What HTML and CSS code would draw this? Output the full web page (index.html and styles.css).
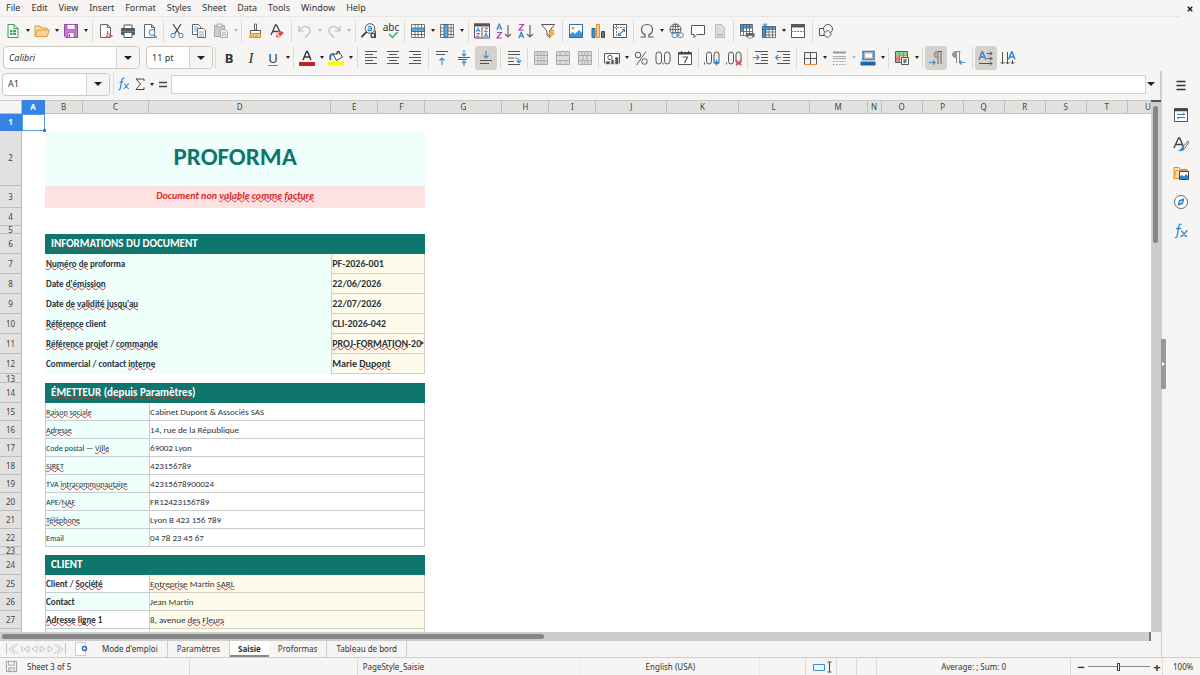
FILE: index.html
```html
<!DOCTYPE html>
<html lang="fr">
<head>
<meta charset="utf-8">
<title>Proforma</title>
<link rel="stylesheet" href="styles.css">
</head>
<body>
<header class="menubar">
  <nav class="menus">
    <button>File</button><button>Edit</button><button>View</button><button>Insert</button><button>Format</button><button>Styles</button><button>Sheet</button><button>Data</button><button>Tools</button><button>Window</button><button>Help</button>
  </nav>
  <button class="close" aria-label="Close document"><svg viewBox="0 0 6 6"><path d="M.8.8l4.4 4.400M5.200.8L.8 5.200" stroke="#222" stroke-width="1.600"/></svg></button>
</header>

<div class="toolbar" role="toolbar" aria-label="Standard">
  <button class="tool" aria-label="New"><svg viewBox="0 0 16 16"><path d="M3 1.500h6l4 4v9H3z" fill="#fff" stroke="#3c9a55"/><path d="M9 1.500v4h4" fill="none" stroke="#3c9a55"/><path d="M5 7h6v5H5z" fill="#3fa75d"/><path d="M5 9.500h6M7.500 7v5" stroke="#fff" stroke-width=".7"/></svg></button><button class="caret" aria-label="New menu"></button>
  <button class="tool" aria-label="Open"><svg viewBox="0 0 16 16"><path d="M1 13V3h5l1 2h6v2" fill="#fbdcae" stroke="#e79a3c"/><path d="M1 13.500L3.500 7h12L13 13.500z" fill="#fcd29a" stroke="#e79a3c"/></svg></button><button class="caret" aria-label="Open menu"></button>
  <button class="tool" aria-label="Save"><svg viewBox="0 0 16 16"><path d="M1.500 1.500h13v13H3l-1.500-1.500z" fill="#c77bd0" stroke="#9a3fa8"/><path d="M4 1.500h8v5H4z" fill="#fff" stroke="#9a3fa8" stroke-width=".7"/><path d="M5 9.500h6v5H5z" fill="#fff" stroke="#9a3fa8" stroke-width=".7"/><path d="M6.500 11v3" stroke="#9a3fa8"/></svg></button><button class="caret" aria-label="Save menu"></button>
  <span class="sep wide"></span>
  <button class="tool" aria-label="Export as PDF"><svg viewBox="0 0 16 16"><path d="M2.500 1.500h7l3 3v10h-10z" fill="#fff" stroke="#666"/><path d="M9.500 1.500v3h3" fill="none" stroke="#666"/><path d="M7 15c2-2 3-5 2.500-7 0 3 2 5 5 5-3-.5-5 .5-7.500 2z" fill="none" stroke="#e0454f"/></svg></button>
  <button class="tool" aria-label="Print"><svg viewBox="0 0 16 16"><path d="M4 5V2h8v3" fill="#fff" stroke="#555"/><rect x="1" y="5" width="14" height="7" rx="1" fill="#555"/><path d="M4 9.500h8v5H4z" fill="#fff" stroke="#555"/><path d="M1 8.500h14" stroke="#2f8fd8" stroke-width="1.500"/></svg></button>
  <button class="tool" aria-label="Print preview"><svg viewBox="0 0 16 16"><path d="M2.500 1.500h7l3 3v10h-10z" fill="#fff" stroke="#666"/><path d="M9.500 1.500v3h3" fill="none" stroke="#666"/><circle cx="10" cy="9.500" r="3" fill="#e8f3fc" stroke="#3c90d6"/><path d="M12 12l3 3" stroke="#3c90d6" stroke-width="1.300"/></svg></button>
  <span class="sep"></span>
  <button class="tool" aria-label="Cut"><svg viewBox="0 0 16 16" fill="none"><path d="M4 1l6.500 10M12 1L5.500 11" stroke="#444" stroke-width="1.200"/><circle cx="4" cy="12.500" r="2.200" stroke="#3c90d6"/><circle cx="12" cy="12.500" r="2.200" stroke="#3c90d6"/></svg></button>
  <button class="tool" aria-label="Copy"><svg viewBox="0 0 16 16" stroke="#666" fill="#fff"><path d="M1.500 1.500h6l2 2v8h-8z"/><path d="M6.500 5.500h6l2 2v7h-8z"/><path d="M3 4h4M3 6h3M3 8h3M8 9h5M8 11h5M8 13h5" stroke="#4b99d8" stroke-width=".8"/></svg></button>
  <button class="tool off" aria-label="Paste"><svg viewBox="0 0 16 16" stroke="#aaa" fill="#ccc"><path d="M1.500 2.500h10v11h-10z"/><path d="M4 1h5v3H4z" fill="#eee"/><path d="M7.500 6.500h5l2 2v6h-7z" fill="#eee"/><path d="M9 10h4M9 12h4"/></svg></button><button class="caret off" aria-label="Paste menu"></button>
  <span class="sep"></span>
  <button class="tool" aria-label="Clone formatting"><svg viewBox="0 0 16 16"><path d="M7.500 1h2v6h-2z" fill="#fff" stroke="#555" stroke-width=".9"/><path d="M3.500 7.500h10v3h-10z" fill="#fff" stroke="#555"/><path d="M3.500 10.500h10v4h-11z" fill="#f9c27a" stroke="#e48c20"/><path d="M6 12v2M9 12v2" stroke="#e48c20"/></svg></button>
  <button class="tool" aria-label="Clear formatting"><svg viewBox="0 0 16 16"><path d="M2 12L6.500 2h1L11 9M3.500 8.500h6" fill="none" stroke="#444" stroke-width="1.300"/><path d="M7 12l5-4 3 2-5 4.500-3-.5z" fill="#e5444c"/><path d="M7 12l2-1.500 2.500 2.500L10 14.500z" fill="#f6b4b7"/></svg></button>
  <span class="sep wide"></span>
  <button class="tool off" aria-label="Undo"><svg viewBox="0 0 16 16" fill="none" stroke="#bbb" stroke-width="1.200"><path d="M2 3v5h5M2.500 7.500C5 3.500 9 2.500 11.500 4.500s2 5-.5 7L8 14.500"/></svg></button><button class="caret off" aria-label="Undo menu"></button>
  <button class="tool off" aria-label="Redo"><svg viewBox="0 0 16 16" fill="none" stroke="#bbb" stroke-width="1.200"><path d="M14 3v5H9M13.500 7.500C11 3.500 7 2.500 4.500 4.500s-2 5 .5 7l3 3"/></svg></button><button class="caret off" aria-label="Redo menu"></button>
  <span class="sep wide"></span>
  <button class="tool" aria-label="Find and replace"><svg viewBox="0 0 16 16" fill="none"><circle cx="9" cy="5.500" r="4.800" stroke="#555"/><path d="M5.500 9L.5 14" stroke="#444" stroke-width="1.800"/><path d="M7 4.500c1-1.500 3.500-1 3.500.5v3M10.500 5.800C8.500 5.500 7 6 7 7s2.500 1.300 3.500-.3" stroke="#2b87d3" stroke-width="1.100"/><circle cx="12" cy="12.500" r="2" stroke="#333" stroke-width="1.200"/><path d="M14.200 7.500v7.500" stroke="#333" stroke-width="1.200"/></svg></button>
  <button class="tool spell" aria-label="Spelling"><span>abc</span><svg viewBox="0 0 16 7"><path d="M6 2l3.500 3.500L14.500 0" fill="none" stroke="#30b070" stroke-width="1.500"/></svg></button>
  <span class="sep"></span>
  <button class="tool" aria-label="Row"><svg viewBox="0 0 16 16"><path d="M1 1h14v14H1z" fill="#fff"/><path d="M1 5h14v4H1z" fill="#58a9e4"/><path d="M1.500 1.500h13v13h-13zM1.500 5h13M1.500 8.500h13M1.500 11.500h13M5 1.500V5M8 1.500V5M11.500 1.500V5M5 9v5.500M8 9v5.500M11.500 9v5.500" fill="none" stroke="#555" stroke-width=".8"/></svg></button><button class="caret" aria-label="Row menu"></button>
  <button class="tool" aria-label="Column"><svg viewBox="0 0 16 16"><path d="M1 1h14v14H1z" fill="#fff"/><path d="M5 1h4v14H5z" fill="#58a9e4"/><path d="M1.500 1.500h13v13h-13zM5 1.500v13M9 1.500v13M12 1.500v13M1.500 5H5M1.500 8H5M1.500 11.500H5M9 5h5.500M9 8h5.500M9 11.500h5.500" fill="none" stroke="#555" stroke-width=".8"/></svg></button><button class="caret" aria-label="Column menu"></button>
  <span class="sep wide"></span>
  <button class="tool" aria-label="Sort"><svg viewBox="0 0 16 16" fill="none"><path d="M.5 1h15v14H.5z" fill="#fff" stroke="#555"/><path d="M0 .5h16V3.500H0z" fill="#555"/><path d="M8 4v11" stroke="#555"/><path d="M2 9l2-4.200L6 9M2.800 7.700h2.400M10 14.200l2-4.200 2 4.200M10.800 13h2.400" stroke="#2b87d3"/><path d="M2.300 10.500h3.400l-3.400 3.500h3.600M10.300 5h3.400l-3.400 3.700h3.600" stroke="#a845b8"/></svg></button>
  <button class="tool" aria-label="Sort ascending"><svg viewBox="0 0 16 16" fill="none"><path d="M.8 6.800L3.300 1l2.500 5.800M1.700 5h3.200" stroke="#2b87d3" stroke-width="1.200"/><path d="M1 9.500h4.500L1 15h4.800" stroke="#a845b8" stroke-width="1.200"/><path d="M12 2v12M9 11l3 3 3-3" stroke="#666" stroke-width="1.200"/></svg></button>
  <button class="tool" aria-label="Sort descending"><svg viewBox="0 0 16 16" fill="none"><path d="M.8 15l2.500-5.800L5.800 15M1.700 13.200h3.200" stroke="#2b87d3" stroke-width="1.200"/><path d="M1 1.500h4.500L1 7h4.800" stroke="#a845b8" stroke-width="1.200"/><path d="M12 2v12M9 11l3 3 3-3" stroke="#666" stroke-width="1.200"/></svg></button>
  <button class="tool" aria-label="AutoFilter"><svg viewBox="0 0 16 16"><path d="M1.500 1.500h13L9.500 8v6L7 12V8z" fill="#fff" stroke="#555"/><path d="M11 7L8 12h2.500L9 15.500 14.500 10H12l2-3z" fill="#f7b45c" stroke="#e48c20" stroke-width=".6"/></svg></button>
  <span class="sep wide"></span>
  <button class="tool" aria-label="Image"><svg viewBox="0 0 16 16"><path d="M1.500 1.500h13v13h-13z" fill="#fff" stroke="#2b6ea8"/><circle cx="5" cy="5" r="1.600" fill="#f2a23c"/><path d="M2 14v-3l3-2 2 2 4-4 3 3v4z" fill="#3f93d6"/></svg></button>
  <button class="tool" aria-label="Chart"><svg viewBox="0 0 16 16"><path d="M2 5.500h3v9H2z" fill="#3f93d6" stroke="#1f6bb0"/><path d="M6.500 1.500h3v13h-3z" fill="#fbd08c" stroke="#e48c20"/><path d="M11.500 8.500h3v6h-3z" fill="#777" stroke="#444"/></svg></button>
  <button class="tool" aria-label="Pivot table"><svg viewBox="0 0 16 16" fill="none"><path d="M1.500 1.500h13v13h-13z" fill="#fff" stroke="#555"/><path d="M2 4.500h12.500M4.500 2v12.500" stroke="#777" stroke-dasharray="2 1"/><path d="M6.500 10v2.500H9M7 12l5-5M10 6.500h2.500V9" stroke="#2b87d3" stroke-width="1.100"/></svg></button>
  <span class="sep"></span>
  <button class="tool" aria-label="Special character"><svg viewBox="0 0 16 16"><path d="M1.500 14H6v-2.500C3.500 10.500 2.500 8.500 2.500 6.500c0-3 2.300-5 5.500-5s5.500 2 5.500 5c0 2-1 4-3.500 5V14h4.500" fill="none" stroke="#555" stroke-width="1.200"/></svg></button><button class="caret" aria-label="Special character menu"></button>
  <button class="tool" aria-label="Hyperlink"><svg viewBox="0 0 16 16" fill="none"><circle cx="7.500" cy="6.500" r="5.500" stroke="#555"/><path d="M2 6.500h11M7.500 1v11M3.500 3.500h8M3.500 9.500h8" stroke="#555" stroke-width=".8"/><ellipse cx="7.500" cy="6.500" rx="2.700" ry="5.500" stroke="#555" stroke-width=".8"/><rect x="4" y="10" width="6" height="4.500" rx="2.200" stroke="#3c90d6" fill="#f6f5f4"/><rect x="9.500" y="10" width="6" height="4.500" rx="2.200" stroke="#3c90d6" fill="#f6f5f4"/><path d="M8 12.200h4" stroke="#3c90d6"/></svg></button>
  <button class="tool" aria-label="Comment"><svg viewBox="0 0 16 16"><path d="M1.500 2.500h13v9H7l-3 3v-3H1.500z" fill="#fff" stroke="#555"/></svg></button>
  <button class="tool off" aria-label="Headers and footers"><svg viewBox="0 0 16 16"><path d="M3.500 1.500h6l3 3v10h-9z" fill="#ddd" stroke="#bbb"/><path d="M5 11h6v2H5z" fill="#bbb"/></svg></button>
  <span class="sep"></span>
  <button class="tool" aria-label="Print area"><svg viewBox="0 0 16 16"><path d="M1 1h12v11H1z" fill="#fff"/><path d="M1 1h12v4H1zM1 5h3v3H1z" fill="#4b9fe0"/><path d="M1.500 1.500h12v11h-12zM1.500 5h12M1.500 8.500h12M4.500 1.500v11M7.500 1.500v11M10.500 1.500v11" fill="none" stroke="#555" stroke-width=".8"/><path d="M7 10h8.500v4H7z" fill="#666"/><path d="M9 12.500h4.500V15H9z" fill="#fff" stroke="#2f78b8" stroke-width=".7"/></svg></button>
  <button class="tool" aria-label="Freeze"><svg viewBox="0 0 16 16"><path d="M2 2h13v13H2z" fill="#fff"/><path d="M1 3h4v12H1zM3 3h12v3H3z" fill="#4b9fe0"/><path d="M1.500 3.500h13v11h-13zM5 3.500v11M8 3.500v11M11.500 3.500v11M1.500 6.500h13M1.500 9h13M1.500 12h13" fill="none" stroke="#555" stroke-width=".8"/><path d="M4 0v5M1.700 1l4.600 3M6.300 1L1.700 4" stroke="#1c78c4" stroke-width=".8"/></svg></button><button class="caret" aria-label="Freeze menu"></button>
  <button class="tool" aria-label="Split window"><svg viewBox="0 0 16 16"><path d="M1.500 1.500h13v13h-13z" fill="#fff" stroke="#555"/><path d="M1 1h14v3.500H1z" fill="#555"/><path d="M1 8.500h14" stroke="#2b87d3" stroke-dasharray="2 1"/></svg></button>
  <span class="sep wide"></span>
  <button class="tool" aria-label="Draw functions"><svg viewBox="0 0 16 16" fill="#f6f5f4" stroke="#555"><path d="M1.500 5.500h7v7h-7z"/><circle cx="10" cy="6" r="4.500"/><path d="M9.500 7l4 4-4 4-4-4z"/></svg></button>
</div>

<div class="toolbar" role="toolbar" aria-label="Formatting">
  <div class="combo font"><input aria-label="Font name" value="Calibri"><button aria-label="Font list"></button></div>
  <div class="combo size"><input aria-label="Font size" value="11 pt"><button aria-label="Size list"></button></div>
  <span class="sep"></span>
  <button class="tool letter bold" aria-label="Bold">B</button>
  <button class="tool letter italic" aria-label="Italic">I</button>
  <button class="tool letter under" aria-label="Underline">U</button><button class="caret" aria-label="Underline menu"></button>
  <span class="sep"></span>
  <button class="tool" aria-label="Font color"><svg viewBox="0 0 16 16"><path d="M4 10L7.500 1.500h1L12 10M5.500 7h5" fill="none" stroke="#333" stroke-width="1.400"/><path d="M0 12h16v4H0z" fill="#c5221f"/></svg></button><button class="caret" aria-label="Font color menu"></button>
  <button class="tool" aria-label="Background color"><svg viewBox="0 0 16 16"><path d="M5.500 5L11 2l3.500 5-6 3.500z" fill="#fff" stroke="#444"/><path d="M9 5V1.500h2.500V4" fill="none" stroke="#444"/><path d="M6 4C2.500 3.500 1.500 6 2.500 10" fill="none" stroke="#2277b8" stroke-width="2"/><path d="M0 12h16v4H0z" fill="#ffff00"/></svg></button><button class="caret" aria-label="Background color menu"></button>
  <span class="sep wide"></span>
  <button class="tool" aria-label="Align left"><svg viewBox="0 0 16 16"><path d="M2 1.500h12M2 4.500h8M2 7.500h12M2 10.500h8M2 13.500h12" stroke="#555"/></svg></button>
  <button class="tool" aria-label="Align center"><svg viewBox="0 0 16 16"><path d="M2 1.500h12M4 4.500h8M2 7.500h12M4 10.500h8M2 13.500h12" stroke="#555"/></svg></button>
  <button class="tool" aria-label="Align right"><svg viewBox="0 0 16 16"><path d="M2 1.500h12M6 4.500h8M2 7.500h12M6 10.500h8M2 13.500h12" stroke="#555"/></svg></button>
  <span class="sep"></span>
  <button class="tool" aria-label="Align top"><svg viewBox="0 0 16 16" fill="none"><path d="M2 1.500h12M2 4.500h9" stroke="#555"/><path d="M8 15V8M5.500 10.500L8 8l2.500 2.500" stroke="#3c90d6" stroke-width="1.200"/></svg></button>
  <button class="tool" aria-label="Center vertically"><svg viewBox="0 0 16 16" fill="none"><path d="M2 7.500h12M2 9.500h9" stroke="#555"/><path d="M8 0v5.500M6 4l2 2 2-2M8 16v-4.500M6 13l2-2 2 2" stroke="#3c90d6" stroke-width="1.200"/></svg></button>
  <button class="tool on" aria-label="Align bottom"><svg viewBox="0 0 16 16" fill="none"><path d="M2 10.500h12M2 13.500h9" stroke="#555"/><path d="M8 1v7M5.500 5.500L8 8l2.500-2.500" stroke="#3c90d6" stroke-width="1.200"/></svg></button>
  <span class="sep wide"></span>
  <button class="tool" aria-label="Wrap text"><svg viewBox="0 0 16 16" fill="none"><path d="M2 1.500h12M2 4.500h12M2 8h6M2 14.500h12M2 11.500h6" stroke="#555"/><path d="M9 8c2.500 0 4 1 4 4M10.800 10.500l2.200 2.200 2.200-2.200" stroke="#3c90d6" stroke-width="1.200"/></svg></button>
  <span class="sep"></span>
  <button class="tool off" aria-label="Merge and center"><svg viewBox="0 0 16 16"><path d="M1.500 1.500h13v13h-13zM1.500 5.500h13M1.500 10.500h13M5 1.500v4M8 1.500v4M11 1.500v4M5 10.500v4M8 10.500v4M11 10.500v4" fill="#ddd" stroke="#aaa"/><path d="M4 8h8" stroke="#aaa"/></svg></button>
  <button class="tool off" aria-label="Merge cells"><svg viewBox="0 0 16 16"><path d="M1.500 1.500h13v13h-13zM1.500 5.500h13M1.500 10.500h13M5 1.500v4M11 1.500v4M5 10.500v4M11 10.500v4" fill="#ddd" stroke="#aaa"/></svg></button>
  <button class="tool off" aria-label="Unmerge cells"><svg viewBox="0 0 16 16"><path d="M1.500 1.500h13v13h-13zM1.500 5.500h13M1.500 10.500h13M5 1.500v4M8 1.500v4M11 1.500v4M6 5.500v5M10 5.500v5M5 10.500v4M8 10.500v4M11 10.500v4" fill="#ddd" stroke="#aaa"/></svg></button>
  <span class="sep"></span>
  <button class="tool" aria-label="Currency"><svg viewBox="0 0 16 16"><path d="M.5 3.500h15v9.500H.5z" fill="#fff" stroke="#555"/><circle cx="6" cy="7.500" r="2.200" fill="none" stroke="#555"/><path d="M2 11h4v3.500H2zM7 9.500h3v5H7zM11 7h3.500v7.500H11z" fill="#555" stroke="#f6f5f4" stroke-width=".6"/></svg></button><button class="caret" aria-label="Currency menu"></button>
  <button class="tool" aria-label="Percent"><svg viewBox="0 0 16 16" fill="none" stroke="#555"><circle cx="5" cy="5" r="2.800"/><circle cx="11.500" cy="11.500" r="2.800"/><path d="M13 1.500L3.500 15"/></svg></button>
  <button class="tool" aria-label="Number"><svg viewBox="0 0 16 16" fill="none" stroke="#555"><rect x="1" y="2" width="5.500" height="12" rx="2.700"/><rect x="9.500" y="2" width="5.500" height="12" rx="2.700"/><path d="M8 12.500v2"/></svg></button>
  <button class="tool" aria-label="Date"><svg viewBox="0 0 16 16" fill="none"><path d="M1.500 2.500h13v12h-13z" fill="#fff" stroke="#555"/><path d="M1.500 3.500h13" stroke="#444" stroke-width="2"/><path d="M4.500 1v3M11.500 1v3" stroke="#444"/><path d="M5.500 7h5l-3 6" stroke="#555" stroke-width="1.200"/></svg></button>
  <span class="sep"></span>
  <button class="tool" aria-label="Add decimal place"><svg viewBox="0 0 16 16" fill="none" stroke="#555"><rect x="2.500" y="2" width="5" height="12" rx="2.500"/><rect x="10" y="2" width="5" height="12" rx="2.500"/><path d="M.5 12.500v2"/><path d="M12.500 9.500v6M9.500 12.500h6" stroke="#2b87d3" stroke-width="1.300"/></svg></button>
  <button class="tool" aria-label="Delete decimal place"><svg viewBox="0 0 16 16" fill="none" stroke="#555"><rect x="2.500" y="2" width="5" height="12" rx="2.500"/><rect x="10" y="2" width="5" height="12" rx="2.500"/><path d="M.5 12.500v2"/><path d="M10 10l5.500 5.500M15.500 10L10 15.500" stroke="#e0454f" stroke-width="1.300"/></svg></button>
  <span class="sep"></span>
  <button class="tool" aria-label="Increase indent"><svg viewBox="0 0 16 16" fill="none"><path d="M2 1.500h13M8 4.500h7M8 7.500h7M8 10.500h7M2 13.500h13" stroke="#555"/><path d="M0 7.500h6M3.500 5L6 7.500 3.500 10" stroke="#3c90d6" stroke-width="1.200"/></svg></button>
  <button class="tool" aria-label="Decrease indent"><svg viewBox="0 0 16 16" fill="none"><path d="M2 1.500h13M8 4.500h7M8 7.500h7M8 10.500h7M2 13.500h13" stroke="#555"/><path d="M6.500 7.500H.5M3 5L.5 7.500 3 10" stroke="#3c90d6" stroke-width="1.200"/></svg></button>
  <span class="sep"></span>
  <button class="tool" aria-label="Borders"><svg viewBox="0 0 16 16" fill="none"><path d="M2.500 14V2.500h12V14M8.500 2.500V14M2.500 8.500h12" stroke="#555"/><path d="M2 14.500h13" stroke="#e8893c"/></svg></button><button class="caret" aria-label="Borders menu"></button>
  <button class="tool off" aria-label="Border style"><svg viewBox="0 0 16 16"><path d="M2 2.500h13" stroke="#999" stroke-width="2"/><path d="M2 6.500h13M2 8.500h13" stroke="#aaa"/><path d="M2 11.500h13M2 14.500h13" stroke="#aaa" stroke-dasharray="2 1"/></svg></button><button class="caret off" aria-label="Border style menu"></button>
  <button class="tool" aria-label="Border color"><svg viewBox="0 0 16 16"><path d="M3 1.500h11v8H3z" fill="#fff" stroke="#2f7fc0" stroke-width="1.600"/><path d="M4.500 3h8v5h-8z" fill="none" stroke="#777" stroke-width=".6"/><path d="M.5 11.500h15v4H.5z" fill="#1e66a8"/></svg></button><button class="caret" aria-label="Border color menu"></button>
  <span class="sep"></span>
  <button class="tool" aria-label="Conditional formatting"><svg viewBox="0 0 16 16"><path d="M1.500 1.500h12v11h-12z" fill="#fff" stroke="#555"/><path d="M2 2h4v3H2zM6 2h7v3H6z" fill="#8ad9a0"/><path d="M2 6h4v3H2zM2 9h4v3H2z" fill="#ef8a84"/><path d="M6 5h7v3H6z" fill="#f7c890"/><path d="M1.500 5.300h12M1.500 8.800h12M5.500 1.500v11M9.500 1.500v11" stroke="#777" stroke-width=".7"/><path d="M7.500 7.500h7v7h-7z" fill="#fff" stroke="#555"/><path d="M9 10h4M9 12h4M12 8.800l-2 4.500" stroke="#333" stroke-width=".8"/></svg></button><button class="caret" aria-label="Conditional menu"></button>
  <span class="sep"></span>
  <button class="tool on" aria-label="Left to right"><svg viewBox="0 0 16 16" fill="none"><path d="M14 1.500H9a3 3 0 0 0 0 6h1M10 1.500V14M13 1.500V14" stroke="#666"/><path d="M6 4.500a3 3 0 0 1 3-3h1v6H9a3 3 0 0 1-3-3z" fill="#aaa"/><path d="M1 12.500h6M5 10.500l2 2-2 2" stroke="#3c90d6" stroke-width="1.200"/></svg></button>
  <button class="tool" aria-label="Right to left"><svg viewBox="0 0 16 16" fill="none"><path d="M10.500 1.500h-5a3 3 0 0 0 0 6h1M6.500 1.500V13M9.500 1.500V13" stroke="#888"/><path d="M2.500 4.500a3 3 0 0 1 3-3h1v6h-1a3 3 0 0 1-3-3z" fill="#999"/><path d="M15 12.500H9.500M11.500 10.500l-2 2 2 2" stroke="#3c90d6" stroke-width="1.200"/></svg></button>
  <span class="sep wide"></span>
  <button class="tool on" aria-label="Horizontal text"><svg viewBox="0 0 16 16" fill="none"><path d="M1 10L4 2h.6L8 10M2.200 7h4.500" stroke="#2b87d3" stroke-width="1.400"/><path d="M9 3.500h5M9 8.500h5M1 13.500h13M12 1.500l2 2-2 2M12 6.500l2 2-2 2M12 11.500l2 2-2 2" stroke="#555"/></svg></button>
  <button class="tool" aria-label="Vertical text"><svg viewBox="0 0 16 16" fill="none"><path d="M8.500 9.500L11.500 2h.6L15 9.500M9.500 7h4.500" stroke="#2b87d3" stroke-width="1.400"/><path d="M2.500 2v12M7.500 2v12M12.500 10v4M.5 12l2 2 2-2M5.500 12l2 2 2-2M10.500 12l2 2 2-2" stroke="#555"/></svg></button>
</div>

<div class="main">
  <div class="workspace">
    <div class="formulabar">
      <div class="combo name"><input aria-label="Name box" value="A1"><button aria-label="Names"></button></div>
      <span class="sep"></span>
      <button class="fx" aria-label="Function wizard"><svg viewBox="0 0 12 14" fill="none" stroke="#2b87d3"><path d="M6.500 1.500C4.500.5 4 2 3.700 4L2.500 10.500c-.3 2-1 2.500-2 2M1.500 5h4" stroke-width="1.200"/><path d="M6 7c2-.5 2 5 5 4.500M11 6.500C9.500 6.500 8 12 5.500 11.500" stroke-width="1.100"/></svg></button>
      <button class="fx" aria-label="Select function"><svg viewBox="0 0 12 14" fill="none" stroke="#444"><path d="M10 4V2H2l4.500 5L2 12.500h8v-2"/></svg></button><button class="caret" aria-label="Function menu"></button>
      <button class="fx" aria-label="Formula"><svg viewBox="0 0 12 14"><path d="M2 5.500h8M2 9.500h8" stroke="#444" stroke-width="1.400"/></svg></button>
      <input class="line" aria-label="Input line">
      <button class="caret big" aria-label="Expand formula bar"></button>
    </div>
    <div class="grid">
      <div class="cells">
        <table>
          <colgroup><col class="c22"><col class="c23"><col class="c38"><col class="c66"><col class="c182"><col class="c47"><col class="c47"><col class="c77"><col class="c47"><col class="c47"><col class="c71"><col class="c71"><col class="c71"><col class="c58"><col class="c14"><col class="c41"><col class="c41"><col class="c41"><col class="c41"><col class="c41"><col class="c41"><col class="c41"></colgroup>
          <thead><tr class="h14"><th class="corner"></th><th class="sel">A</th><th>B</th><th>C</th><th>D</th><th>E</th><th>F</th><th>G</th><th>H</th><th>I</th><th>J</th><th>K</th><th>L</th><th>M</th><th>N</th><th>O</th><th>P</th><th>Q</th><th>R</th><th>S</th><th>T</th><th>U</th></tr></thead>
          <tbody>
            <tr class="h17"><th class="sel">1</th><td class="cursor"><i></i></td><td colspan="20"></td></tr>
            <tr class="h55"><th>2</th><td></td><td colspan="5" class="title">PROFORMA</td></tr>
            <tr class="h22"><th>3</th><td></td><td colspan="5" class="notice">Document non <u>valable</u> <u>comme</u> <u>facture</u></td></tr>
            <tr class="h18"><th>4</th><td></td></tr>
            <tr class="h8"><th>5</th><td></td></tr>
            <tr class="h20"><th>6</th><td></td><td colspan="5" class="section"><u>INFORMATIONS</u> DU DOCUMENT</td></tr>
            <tr class="h20"><th>7</th><td></td><td colspan="3" class="label strong"><u>Numéro</u> <u>de</u> proforma</td><td colspan="2" class="value big">PF-2026-001</td></tr>
            <tr class="h20"><th>8</th><td></td><td colspan="3" class="label strong">Date <u>d'émission</u></td><td colspan="2" class="value big">22/06/2026</td></tr>
            <tr class="h20"><th>9</th><td></td><td colspan="3" class="label strong">Date <u>de</u> <u>validité</u> <u>jusqu'au</u></td><td colspan="2" class="value big">22/07/2026</td></tr>
            <tr class="h20"><th>10</th><td></td><td colspan="3" class="label strong"><u>Référence</u> client</td><td colspan="2" class="value big">CLI-2026-042</td></tr>
            <tr class="h20"><th>11</th><td></td><td colspan="3" class="label strong"><u>Référence</u> <u>projet</u> / <u>commande</u></td><td colspan="2" class="value big cut"><u>PROJ-FORMATION</u>-20<i></i></td></tr>
            <tr class="h20"><th>12</th><td></td><td colspan="3" class="label strong">Commercial / contact <u>interne</u></td><td colspan="2" class="value big">Marie <u>Dupont</u></td></tr>
            <tr class="h9"><th>13</th><td></td></tr>
            <tr class="h20"><th>14</th><td></td><td colspan="5" class="section"><u>ÉMETTEUR</u> (<u>depuis</u> <u>Paramètres</u>)</td></tr>
            <tr class="h18"><th>15</th><td></td><td colspan="2" class="label ruled"><u>Raison</u> <u>sociale</u></td><td colspan="3" class="plain">Cabinet Dupont &amp; Associés SAS</td></tr>
            <tr class="h18"><th>16</th><td></td><td colspan="2" class="label ruled"><u>Adresse</u></td><td colspan="3" class="plain">14, rue de la République</td></tr>
            <tr class="h18"><th>17</th><td></td><td colspan="2" class="label ruled">Code postal — <u>Ville</u></td><td colspan="3" class="plain">69002 Lyon</td></tr>
            <tr class="h18"><th>18</th><td></td><td colspan="2" class="label ruled"><u>SIRET</u></td><td colspan="3" class="plain">423156789</td></tr>
            <tr class="h18"><th>19</th><td></td><td colspan="2" class="label ruled">TVA <u>intracommunautaire</u></td><td colspan="3" class="plain">42315678900024</td></tr>
            <tr class="h18"><th>20</th><td></td><td colspan="2" class="label ruled">APE/<u>NAF</u></td><td colspan="3" class="plain">FR12423156789</td></tr>
            <tr class="h18"><th>21</th><td></td><td colspan="2" class="label ruled"><u>Téléphone</u></td><td colspan="3" class="plain">Lyon B 423 156 789</td></tr>
            <tr class="h18"><th>22</th><td></td><td colspan="2" class="label ruled">Email</td><td colspan="3" class="plain">04 78 23 45 67</td></tr>
            <tr class="h8"><th>23</th><td></td></tr>
            <tr class="h20"><th>24</th><td></td><td colspan="5" class="section">CLIENT</td></tr>
            <tr class="h18"><th>25</th><td></td><td colspan="2" class="label ruled strong white">Client / <u>Société</u></td><td colspan="3" class="value"><u>Entreprise</u> Martin <u>SARL</u></td></tr>
            <tr class="h18"><th>26</th><td></td><td colspan="2" class="label ruled strong">Contact</td><td colspan="3" class="value">Jean Martin</td></tr>
            <tr class="h18"><th>27</th><td></td><td colspan="2" class="label ruled strong white"><u>Adresse</u> <u>ligne</u> 1</td><td colspan="3" class="value">8, avenue <u>des</u> <u>Fleurs</u></td></tr>
            <tr class="h18"><th></th><td></td><td colspan="2" class="label ruled"></td><td colspan="3" class="value"></td></tr>
          </tbody>
        </table>
      </div>
      <div class="vscroll"><span></span></div>
    </div>
    <div class="hscroll"><span></span></div>
    <div class="tabs">
      <svg class="nav" viewBox="0 0 62 14" fill="none" stroke="#c4c4c4"><path d="M1.500 1v12M10 2L4 7l6 5M13 2L7 7l6 5M17 4v6M24 4l-5 3 5 3zM32 4l-5 3 5 3zM35 4l5 3-5 3zM43 4l5 3-5 3zM49 2l6 5-6 5M52 2l6 5-6 5M60.500 1v12"/></svg>
      <button class="addtab" aria-label="Add sheet"><svg viewBox="0 0 14 16"><path d="M1.500 1.500h10v13h-10z" fill="#fff" stroke="#ccc"/><circle cx="10.500" cy="7.500" r="2" fill="#fff" stroke="#2866c0" stroke-width="1.500"/></svg></button>
      <button class="tab">Mode d'emploi</button><button class="tab">Paramètres</button><button class="tab current">Saisie</button><button class="tab">Proformas</button><button class="tab">Tableau de bord</button>
    </div>
  </div>
  <aside class="sidebar">
    <button aria-label="Sidebar settings"><svg viewBox="0 0 16 16"><path d="M3.500 3.500h9M3.500 7.500h9M3.500 11.500h9" stroke="#333" stroke-width="1.400"/></svg></button>
    <button aria-label="Properties"><svg viewBox="0 0 16 16" fill="none"><path d="M1.500 1.500h13v13h-13z" fill="#fff" stroke="#555"/><path d="M1 3h14" stroke="#444" stroke-width="2.500"/><path d="M4 7.500h8M4 10.500h8M10 6l2 1.500M6 12l-2-1.500" stroke="#2b87d3"/></svg></button>
    <button aria-label="Styles"><svg viewBox="0 0 16 16" fill="none"><path d="M1 12L5.500 2h1.200L10.500 11M2.500 8.500h6.500" stroke="#444" stroke-width="1.400"/><path d="M15 5l-5 6 1.500 1.500L15.500 7z" fill="#fff" stroke="#555" stroke-width=".9"/><path d="M10 11c-3 .5-2 3.500-5.500 3.500 3.500 1.500 7 .5 7-2z" fill="#3c90d6"/></svg></button>
    <button aria-label="Gallery"><svg viewBox="0 0 16 16"><path d="M1 13.500V2.500h5l1 2h7v2M1 13.500h5" fill="#fce0b8" stroke="#e48c20"/><path d="M1 13.500l2-8h12v8z" fill="#fbd3a0" stroke="#e48c20" stroke-width=".8"/><path d="M6.500 6.500h9v8h-9z" fill="#fff" stroke="#444"/><path d="M7 14v-3l2-1 2 1.500 2-2.500 2 2v3z" fill="#2b87d3"/></svg></button>
    <button aria-label="Navigator"><svg viewBox="0 0 16 16"><circle cx="8" cy="8" r="6.500" fill="#fff" stroke="#666"/><path d="M11.500 4l-1.500 6-5.500 2L6 6z" fill="#2b87d3"/><circle cx="8" cy="8" r="1" fill="#fff"/></svg></button>
    <button aria-label="Functions"><svg viewBox="0 0 16 16" fill="none" stroke="#2b87d3"><path d="M8.500 1.500C6.500.5 6 2 5.700 4L4.300 12c-.4 2.500-1.300 3-2.500 2.500M3 5.500h5" stroke-width="1.300"/><path d="M8 8c2.500-.5 2.500 6 6 5.500M14.500 7.500c-2 0-4 6.500-7 6" stroke-width="1.300"/></svg></button>
    <span class="handle"></span>
  </aside>
</div>

<footer class="status">
  <span class="doc"><svg viewBox="0 0 14 14" fill="none" stroke="#999"><path d="M1.500 1.500h11v11h-11zM4 1.500v4h6v-4M4 12.500V8.500h6v4M6 10v2"/></svg></span>
  <span>Sheet 3 of 5</span>
  <span></span>
  <span class="first">PageStyle_Saisie</span>
  <span class="mid first">English (USA)</span>
  <span></span>
  <span class="mode"><svg viewBox="0 0 22 12" fill="none"><path d="M2.500 3.500h11v6h-11z" stroke="#3c90d6"/><path d="M18.500 1.500v9M16.500 1h4M16.500 11h4" stroke="#444"/></svg></span>
  <span></span><span></span>
  <span class="mid">Average: ; Sum: 0</span>
  <span class="zoom"><button aria-label="Zoom out">−</button><input type="range" aria-label="Zoom" min="0" max="100" value="49"><button aria-label="Zoom in">+</button></span>
  <span class="pct">100%</span>
</footer>
</body>
</html>
```
FILE: styles.css
```css
* { box-sizing: border-box; }
body { margin: 0; height: 100vh; display: flex; flex-direction: column; overflow: hidden; background: #f6f5f4; color: #333; font: 9px/12px "Noto Sans", sans-serif; }
button, input { font: inherit; color: inherit; margin: 0; padding: 0; border: 0; background: none; min-width: 0; }
svg { display: block; }

.menubar { display: flex; flex: none; height: 17px; justify-content: space-between; }
.menus { display: flex; flex: 1; gap: 11px; padding-left: 6px; border-bottom: 1px solid #e6e5e3; }
.close { width: 17px; display: grid; place-items: center; margin-right: 2px; }
.close svg { width: 6px; height: 6px; }

.toolbar { display: flex; flex: none; height: 27px; align-items: center; padding-left: 2px; }
.tool { flex: none; width: 22px; height: 24px; display: grid; place-items: center; border-radius: 3px; }
.tool svg { width: 16px; height: 16px; }
.tool.on { background: #d5d2ce; }
.spell { align-content: center; font-size: 10px; line-height: 10px; }
.tool.spell svg { height: 7px; }
.caret { flex: none; width: 7px; height: 22px; display: grid; place-items: center; }
.caret::after, .combo button::after { content: ""; border: 2px solid transparent; border-top: 3px solid #222; border-bottom: 0; }
.caret.off::after { border-top-color: #bbb; }
.caret.big { width: 10px; }
.caret.big::after, .combo button::after { border-width: 4px 4px 0; }
.sep { flex: none; width: 5px; height: 22px; background: linear-gradient(#dddbd8, #dddbd8) center / 1px 100% no-repeat; }
.sep.wide { width: 6px; }
.letter { font-size: 13px; line-height: 16px; }
.bold { font-weight: 700; }
.italic { font-family: "Liberation Serif", serif; font-style: italic; font-size: 15px; }
.under { text-decoration: underline #3c90d6; text-underline-offset: 2px; }

.combo { display: flex; flex: none; height: 23px; border: 1px solid #cdc7c2; border-radius: 4px; overflow: hidden; background: #fff; }
.combo input { flex: 1; padding-left: 5px; }
.combo button { width: 23px; display: grid; place-items: center; border-left: 1px solid #d8d4d0; background: #f6f5f4; }
.font { width: 137px; margin-left: 1px; font-style: italic; }
.size { width: 67px; margin-left: 6px; }
.name { width: 108px; }

.main { flex: 1; display: flex; min-height: 0; }
.workspace { flex: 1; min-width: 0; display: flex; flex-direction: column; }
.formulabar { display: flex; flex: none; height: 29px; align-items: center; padding: 0 4px 3px 2px; border-right: 1px solid #d0cecb; }
.formulabar .sep { margin-left: 1px; }
.fx { flex: none; width: 16px; height: 20px; display: grid; place-items: center; }
.fx svg { width: 12px; height: 14px; }
.line { flex: 1; height: 19px; border: 1px solid #d5d2cf; background: #fff; padding: 0 4px; }

.grid { flex: 1; display: flex; min-height: 0; }
.cells { flex: 1; overflow: hidden; background: #fff; }
table { width: 1169px; table-layout: fixed; border-collapse: separate; border-spacing: 0; }
th, td { padding: 0; overflow: hidden; white-space: nowrap; line-height: 8px; }
th { background: #e1e1e0; border-right: 1px solid #bdbdbc; border-bottom: 1px solid #bdbdbc; font-size: 8px; font-weight: 400; color: #444; text-align: center; }
thead th { border-top: 1px solid #c8c8c7; }
th.corner { background: #f6f5f4; }
th.sel { background: #3584e4; border-color: #3584e4; color: #fff; font-weight: 700; }
td { font-family: Carlito, Lato, sans-serif; font-size: 9px; color: #2b3440; text-align: left; }
u { text-decoration: underline wavy #e03030 1px; text-underline-offset: -1px; text-decoration-skip-ink: none; }

.c14 { width: 14px; } .c22 { width: 22px; } .c23 { width: 23px; } .c38 { width: 38px; } .c41 { width: 41px; }
.c47 { width: 47px; } .c58 { width: 58px; } .c66 { width: 66px; } .c71 { width: 71px; } .c77 { width: 77px; } .c182 { width: 182px; }
.h8 { height: 8px; } .h9 { height: 9px; } .h14 { height: 14px; } .h17 { height: 17px; } .h18 { height: 18px; }
.h20 { height: 20px; } .h22 { height: 22px; } .h55 { height: 55px; }
.h8 th, .h9 th { line-height: 7px; }

.cursor { position: relative; overflow: visible; box-shadow: inset 0 0 0 1px #5b9bea; }
.cursor i { position: absolute; right: -1px; bottom: -1px; width: 3px; height: 3px; background: #3584e4; }
.title { background: #effffc; color: #0f766e; font-size: 25px; font-weight: 700; line-height: 30px; text-align: center; padding-bottom: 4px; }
.notice { background: #fee2e2; color: #dc2626; font-size: 10px; font-weight: 700; font-style: italic; line-height: 14px; text-align: center; padding-bottom: 2px; }
.section { background: #0f766e; color: #fff; font-size: 11px; font-weight: 700; line-height: 16px; padding-left: 6px; }
.label, .value, .plain { line-height: 14px; padding-left: 1px; }
.label { background: #effffc; }
.strong, .big { font-weight: 700; }
.value { background: #fffbeb; border: 1px solid #d1d0c8; border-top: 0; }
.big { font-size: 10px; }
.plain { border: 1px solid #c9cdcd; border-top: 0; }
.value, .plain { padding-left: 0; }
.ruled { border: 1px solid #c9cdcd; border-width: 0 0 1px 1px; padding-left: 0; font-size: 8px; }
.ruled.strong { font-size: 9px; }
.white { background: #fff; }
.cut { position: relative; }
.cut i { position: absolute; right: 0; top: 7px; border: 2px solid transparent; border-left: 3px solid #8b1a1a; border-right: 0; }

.vscroll { width: 10px; flex: none; background: #cdcdcd; padding: 4px 3px 0 2px; border-top: 2px solid #555; }
.vscroll span { display: block; height: 26%; border-radius: 3px; background: #858585; }
.hscroll { flex: none; height: 9px; background: #cdcdcd; padding: 2px; margin-right: 10px; border-right: 2px solid #777; }
.hscroll span { display: block; width: 47.3%; height: 5px; border-radius: 3px; background: #858585; }

.tabs { display: flex; flex: none; height: 17px; border-bottom: 1px solid #d0cecb; font-size: 8px; }
.nav { width: 62px; height: 14px; margin: 1px 7px 0 5px; }
.addtab { width: 14px; margin-right: 5px; }
.addtab svg { width: 14px; height: 16px; }
.tab { padding: 0 9px; border-right: 1px solid #d0cecb; }
.tab.current { background: #fff; font-weight: 700; border-right: 0; padding: 2px 8px 0; border-bottom: 2px solid #888; }

.sidebar { position: relative; flex: none; width: 39px; display: flex; flex-direction: column; align-items: center; gap: 5px; padding-top: 3px; border-left: 1px solid #d0cecb; border-bottom: 1px solid #d0cecb; }
.sidebar button { width: 24px; height: 24px; display: grid; place-items: center; }
.sidebar button svg { width: 16px; height: 16px; }
.handle { position: absolute; left: -1px; top: 268px; width: 5px; height: 50px; background: #999; }
.handle::after { content: ""; position: absolute; left: 1px; top: 23px; border: 2px solid transparent; border-left: 3px solid #fff; border-right: 0; }

.status { flex: none; height: 17px; display: grid; grid-template-columns: 22px 168fr 168fr 224fr 179fr 46fr 31px 20px 20px 194fr 92px 37px; font-size: 8px; line-height: 17px; }
.status > span { padding-left: 5px; border-right: 1px solid #dddbd8; white-space: nowrap; }
.status > span.doc { border: 0; }
.status > .mid { text-align: center; padding: 0; }
.status > .first { border-right-color: #eceae8; }
.doc svg { width: 13px; height: 13px; margin-top: 2px; }
.mode svg { width: 22px; height: 12px; margin-top: 3px; }
.zoom { display: flex; align-items: center; gap: 2px; }
.zoom button { font-size: 13px; font-weight: 700; width: 10px; line-height: 14px; }
.zoom input { flex: 1; height: 9px; appearance: none; background: linear-gradient(#888, #888) center / 100% 1px no-repeat; }
.zoom input::-webkit-slider-thumb { appearance: none; width: 3px; height: 8px; border: 1px solid #444; background: #eee; }
.status > .pct { border: 0; padding-left: 10px; }
```
